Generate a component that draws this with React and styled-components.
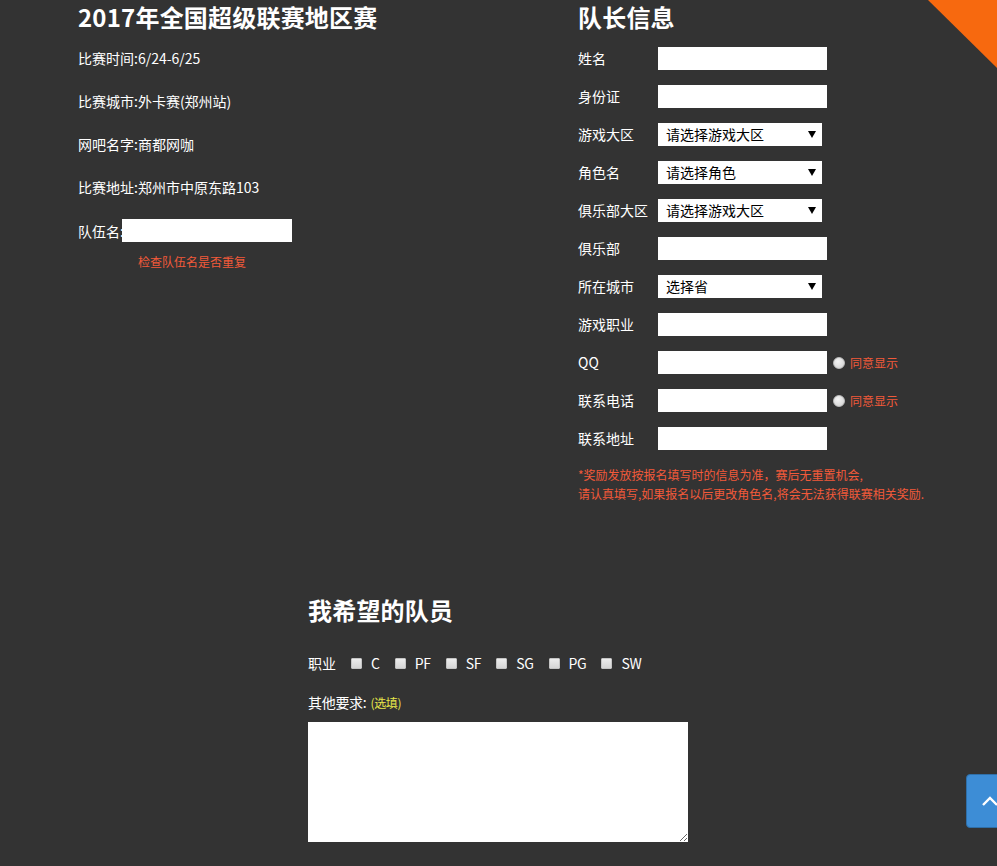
import React from "react";
import styled, { createGlobalStyle } from "styled-components";

const Global = createGlobalStyle`
  html, body { margin: 0; padding: 0; background: #333333; }
  body { font-family: "Noto Sans CJK SC", "Noto Sans", sans-serif; color: #ffffff; }
  * { box-sizing: border-box; }
`;

const Page = styled.div`
  position: relative;
  min-height: 866px;
  overflow: hidden;
  background: #333333;
`;

const Corner = styled.div`
  position: absolute;
  top: 0;
  right: 0;
  width: 69px;
  height: 68px;
  background: #f7690f;
  clip-path: polygon(0 0, 100% 0, 100% 100%);
`;

const Top = styled.div`
  display: flex;
  padding-left: 78px;
`;

const LeftCol = styled.div`
  width: 500px;
  display: flex;
  flex-direction: column;
`;

const RightCol = styled.div`
  display: flex;
  flex-direction: column;
`;

const Title = styled.h1`
  margin: 0;
  font-size: 24px;
  line-height: 34px;
  font-weight: 700;
  color: #ffffff;
  letter-spacing: 0.2px;
`;

const InfoList = styled.div`
  display: flex;
  flex-direction: column;
  gap: 23px;
  margin-top: 14px;
`;

const InfoLine = styled.div`
  font-size: 14px;
  line-height: 20px;
  height: 20px;
  white-space: nowrap;
`;

const TeamRow = styled.div`
  display: flex;
  align-items: center;
  height: 23px;
  margin-top: -1px;
  font-size: 14px;
`;

const TeamLabel = styled.span`
  width: 44px;
  white-space: nowrap;
`;

const TextInput = styled.input`
  display: block;
  width: ${(p) => p.$w || 169}px;
  height: 23px;
  border: none;
  outline: none;
  padding: 0 4px;
  background: #ffffff;
  font-size: 14px;
`;

const Hint = styled.div`
  margin-top: 12px;
  padding-left: 60px;
  font-size: 12px;
  line-height: 16px;
  color: #f25a3a;
`;

const FormList = styled.div`
  display: flex;
  flex-direction: column;
  gap: 15px;
  margin-top: 13px;
`;

const FormRow = styled.div`
  display: flex;
  align-items: center;
  height: 23px;
`;

const Label = styled.label`
  width: 80px;
  font-size: 14px;
  line-height: 20px;
  white-space: nowrap;
  color: #ffffff;
  margin-top: -1px;
`;

const SelectWrap = styled.div`
  position: relative;
  width: 164px;
  height: 23px;
`;

const Select = styled.select`
  display: block;
  appearance: none;
  -webkit-appearance: none;
  width: 100%;
  height: 23px;
  margin: 0;
  border: none;
  border-radius: 0;
  outline: none;
  background: #ffffff;
  color: #000000;
  font-family: "Noto Sans CJK SC", sans-serif;
  font-size: 14px;
  padding: 0 0 0 8px;
  line-height: 23px;
`;

const Arrow = styled.span`
  position: absolute;
  right: 6px;
  top: 8px;
  width: 0;
  height: 0;
  border-left: 4px solid transparent;
  border-right: 4px solid transparent;
  border-top: 7px solid #000000;
  pointer-events: none;
`;

const Radio = styled.span`
  display: inline-block;
  width: 12px;
  height: 12px;
  border-radius: 50%;
  margin-left: 6px;
  background: radial-gradient(circle at 40% 35%, #f4f4f4, #cfcfcf);
  border: 1px solid #bdbdbd;
`;

const Agree = styled.span`
  margin-left: 5px;
  font-size: 12px;
  color: #f25a3a;
`;

const Note = styled.div`
  margin-top: 15px;
  font-size: 12px;
  line-height: 19px;
  color: #f25a3a;
  white-space: nowrap;
`;

const Bottom = styled.div`
  padding-left: 308px;
  margin-top: 90px;
  display: flex;
  flex-direction: column;
`;

const PosRow = styled.div`
  display: flex;
  align-items: center;
  height: 20px;
  margin-top: 26px;
  font-size: 14px;
`;

const Check = styled.span`
  display: inline-block;
  width: 11px;
  height: 11px;
  margin-left: 15px;
  margin-right: 9px;
  border: 1px solid #c4c4c4;
  border-radius: 1px;
  background: linear-gradient(#ececec, #d6d6d6);
`;

const PosName = styled.span`
  letter-spacing: -0.3px;
`;

const Other = styled.div`
  margin-top: 19px;
  font-size: 14px;
  line-height: 20px;
  letter-spacing: -0.3px;
`;

const Optional = styled.span`
  font-size: 12px;
  color: #e8e84a;
  margin-left: 4px;
`;

const Area = styled.textarea`
  display: block;
  margin-top: 9px;
  width: 380px;
  height: 120px;
  border: none;
  outline: none;
  background: #ffffff;
`;

const ToTop = styled.div`
  position: fixed;
  left: 966px;
  top: 774px;
  width: 50px;
  height: 54px;
  border-radius: 4px;
  background: #3d8dd6;
  border: 1px solid #2f6fa8;
  display: flex;
  align-items: center;
  padding-left: 15px;
`;

const infos = [
  "比赛时间:6/24-6/25",
  "比赛城市:外卡赛(郑州站)",
  "网吧名字:商都网咖",
  "比赛地址:郑州市中原东路103",
];

const fields = [
  { label: "姓名", type: "input" },
  { label: "身份证", type: "input" },
  { label: "游戏大区", type: "select", text: "请选择游戏大区" },
  { label: "角色名", type: "select", text: "请选择角色" },
  { label: "俱乐部大区", type: "select", text: "请选择游戏大区" },
  { label: "俱乐部", type: "input" },
  { label: "所在城市", type: "select", text: "选择省" },
  { label: "游戏职业", type: "input" },
  { label: "QQ", type: "input", agree: true },
  { label: "联系电话", type: "input", agree: true },
  { label: "联系地址", type: "input" },
];

const positions = ["C", "PF", "SF", "SG", "PG", "SW"];

export default function App() {
  return (
    <Page>
      <Global />
      <Corner />
      <Top>
        <LeftCol>
          <Title>2017年全国超级联赛地区赛</Title>
          <InfoList>
            {infos.map((t) => (
              <InfoLine key={t}>{t}</InfoLine>
            ))}
            <TeamRow>
              <TeamLabel>队伍名:</TeamLabel>
              <TextInput $w={170} />
            </TeamRow>
          </InfoList>
          <Hint>检查队伍名是否重复</Hint>
        </LeftCol>
        <RightCol>
          <Title>队长信息</Title>
          <FormList>
            {fields.map((f) => (
              <FormRow key={f.label}>
                <Label>{f.label}</Label>
                {f.type === "input" ? (
                  <TextInput />
                ) : (
                  <SelectWrap>
                    <Select defaultValue="0">
                      <option value="0">{f.text}</option>
                    </Select>
                    <Arrow />
                  </SelectWrap>
                )}
                {f.agree && (
                  <>
                    <Radio />
                    <Agree>同意显示</Agree>
                  </>
                )}
              </FormRow>
            ))}
          </FormList>
          <Note>
            *奖励发放按报名填写时的信息为准，赛后无重置机会,
            <br />
            请认真填写,如果报名以后更改角色名,将会无法获得联赛相关奖励.
          </Note>
        </RightCol>
      </Top>
      <Bottom>
        <Title>我希望的队员</Title>
        <PosRow>
          <span>职业</span>
          {positions.map((p) => (
            <React.Fragment key={p}>
              <Check />
              <PosName>{p}</PosName>
            </React.Fragment>
          ))}
        </PosRow>
        <Other>
          其他要求:<Optional>(选填)</Optional>
        </Other>
        <Area />
      </Bottom>
      <ToTop>
        <svg width="16" height="10" viewBox="0 0 16 10">
          <path d="M1 9 L8 2 L15 9" fill="none" stroke="#ffffff" strokeWidth="2.4" />
        </svg>
      </ToTop>
    </Page>
  );
}
